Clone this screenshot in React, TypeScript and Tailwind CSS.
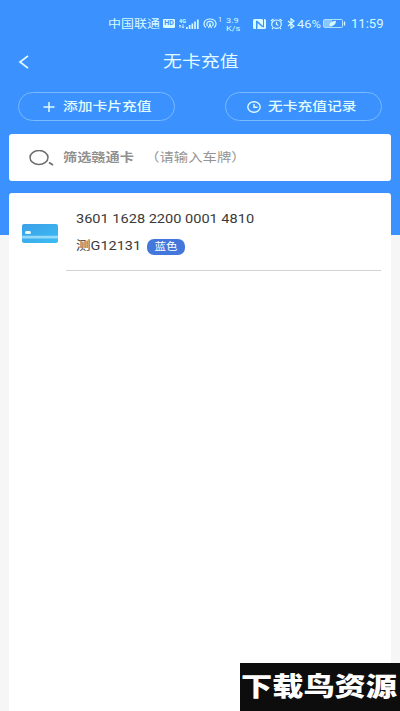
import React from 'react';

const FONT = "font-[Roboto,'Noto_Sans_CJK_SC',sans-serif]";

interface WideProps {
  width: string;
  className?: string;
  scale?: string;
  children: React.ReactNode;
}

// Text set slightly wider than its natural proportions
function Wide({ width, className = '', scale = 'scale-x-[1.18]', children }: WideProps) {
  return (
    <span className={`block shrink-0 ${width}`}>
      <span className={`block w-max origin-left whitespace-nowrap ${scale} ${className}`}>{children}</span>
    </span>
  );
}

function StatusBar() {
  return (
    <div className="flex h-[47px] items-center pl-[108px] text-[#d6fbff]">
      <Wide width="w-[55px]" className="pt-0.5 text-[11px] leading-4">中国联通</Wide>
      <span className="flex h-[9px] w-3 shrink-0 items-center justify-center rounded-[1px] bg-[#d6fbff] text-[7px] leading-none font-bold text-[#3b91fe]">
        HD
      </span>
      <svg className="ml-1 h-3 w-5 shrink-0" viewBox="0 0 20 12" fill="currentColor">
        <text x="0" y="4.8" fontSize="5.5" fontWeight="bold" fontFamily="Roboto">4G</text>
        <path d="M1 7v3M0 8.500l1-1.500 1 1.500M4 6v4M3 8.500l1 1.500 1-1.500" stroke="currentColor" strokeWidth="0.8" fill="none" />
        <path d="M7 9h1.700v2H7zM9.800 7h1.700v4H9.800zM12.500 5.500h1.700V11h-1.700zM15.200 3.500h1.700V11h-1.700zM18 1.500h1.700V11H18z" />
      </svg>
      <svg className="ml-1 h-[11px] w-[14px] shrink-0" viewBox="0 0 14 11" fill="none" stroke="currentColor" strokeWidth="1.200">
        <path d="M2.800 9.500C-.5 6.500.8 1 7 1s7.500 5.500 4.200 8.500" />
        <path d="M4.600 8C2.800 6 4 3.400 7 3.400S11.200 6 9.400 8" />
        <path d="M5.500 10 7 6.500 8.500 10" />
        <circle cx="7" cy="6" r="0.800" fill="currentColor" stroke="none" />
      </svg>
      <span className="-mt-1.5 ml-px w-[8px] shrink-0 text-[7px] leading-none">1</span>
      <span className="w-[27px] shrink-0 pt-0.5 text-[8px] leading-[8px]">
        <span className="block w-max origin-left scale-x-[1.15]">3.9</span>
        <span className="block w-max origin-left scale-x-[1.15]">K/s</span>
      </span>
      <svg className="h-[10px] w-[13px] shrink-0" viewBox="0 0 13 10" fill="none">
        <path d="M1.500 0H9l1 1v6L4 1.500 3 2v8H1.500Q0 10 0 8.500v-7Q0 0 1.500 0zM11.500 10H4L4.500 9V4L9 8l2 .5V0h.5Q13 0 13 1.500v7q0 1.500-1.500 1.500z" fill="currentColor" />
      </svg>
      <svg className="ml-1 h-3 w-[13px] shrink-0" viewBox="0 0 13 12" fill="none" stroke="currentColor" strokeWidth="1.200">
        <ellipse cx="6.500" cy="6.200" rx="4.800" ry="4.200" />
        <path d="M.8 3 3.400 1M12.200 3 9.600 1M6.500 3.800v2.700l1.800 1M3 10 2 11M10 10l1 1" />
      </svg>
      <svg className="ml-1 h-[11px] w-2 shrink-0" viewBox="0 0 8 11" fill="none" stroke="currentColor" strokeWidth="1.200">
        <path d="m1 3 6 5-3 2.300V.7L7 3 1 8" />
      </svg>
      <Wide width="w-[27px]" className="ml-[2px] pt-px text-[11.500px] leading-4" scale="scale-x-[1.12]">46%</Wide>
      <svg className="ml-px h-[9px] w-[23px] shrink-0" viewBox="0 0 23 9" fill="none">
        <rect x=".5" y=".5" width="19" height="8" rx="1" stroke="currentColor" strokeOpacity=".75" />
        <path d="M1 1h8v7H1z" fill="currentColor" fillOpacity=".5" />
        <path d="M6.500 7C6 3.500 9 2 13 1.700 13 5.500 10 7.500 6.500 7z" fill="currentColor" />
        <path d="M21.500 2.500v4" stroke="currentColor" strokeWidth="1.400" />
      </svg>
      <Wide width="w-[34px]" className="ml-[5px] pt-px text-[12px] leading-4" scale="scale-x-[1.09]">11:59</Wide>
    </div>
  );
}

function Header() {
  return (
    <div className="flex h-[30px] items-center pl-[18px] text-[#e4fcff]">
      <svg className="h-[14px] w-[11px]" viewBox="0 0 11 14" fill="none" stroke="currentColor" strokeWidth="1.700">
        <path d="M10 .8 2 7l8 6.200" />
      </svg>
      <Wide width="w-[76px]" className="ml-[134px] text-[16px] leading-6">无卡充值</Wide>
    </div>
  );
}

function Actions() {
  return (
    <div className="mt-[15px] flex justify-between px-[18px] text-[#e0fcff]">
      <button className="flex h-[29px] w-[157px] items-center rounded-full border border-[#79b9ff] pl-6">
        <svg className="h-[10px] w-3" viewBox="0 0 12 10" fill="none" stroke="currentColor" strokeWidth="1.500">
          <path d="M.5 5h11M6 0v10" />
        </svg>
        <Wide width="w-[90px]" className="ml-2 pt-px text-left text-[12.500px] leading-4 font-medium">添加卡片充值</Wide>
      </button>
      <button className="flex h-[29px] w-[157px] items-center rounded-full border border-[#79b9ff] pl-[21px]">
        <svg className="h-3 w-[14px]" viewBox="0 0 14 12" fill="none" stroke="currentColor" strokeWidth="1.400">
          <ellipse cx="7" cy="6" rx="6.200" ry="5.200" />
          <path d="M7 3v3.200h3.500" />
        </svg>
        <Wide width="w-[90px]" className="ml-[7px] text-left text-[12.500px] leading-4 font-medium">无卡充值记录</Wide>
      </button>
    </div>
  );
}

function SearchBox() {
  return (
    <div className="mx-[9px] mt-[13px] flex h-[47px] items-center rounded-[3px] bg-white pl-5">
      <svg className="h-4 w-[25px] shrink-0" viewBox="0 0 25 16" fill="none" stroke="#6e6e6e" strokeWidth="1.500">
        <ellipse cx="10" cy="7.500" rx="9" ry="7" />
        <path d="m20 12.500 4 2.500" strokeWidth="1.800" />
      </svg>
      <Wide width="w-[82px]" className="ml-[9px] text-[12px] leading-4 font-bold text-[#909090]">筛选赣通卡</Wide>
      <Wide width="w-[100px]" className="ml-[9px] text-[12.200px] leading-4 text-[#959595]">（请输入车牌）</Wide>
    </div>
  );
}

function CardItem({ number, plate, color }: { number: string; plate: string; color: string }) {
  return (
    <div className="flex pl-[13px]">
      <svg className="mt-[31px] h-[19px] w-9 shrink-0" viewBox="0 0 36 19">
        <defs>
          <linearGradient id="card-fill" x1="0" x2="1" y1="0" y2="1">
            <stop offset="0" stopColor="#3d9fe8" />
            <stop offset="1" stopColor="#3abdf3" />
          </linearGradient>
        </defs>
        <rect width="36" height="19" rx="2" fill="url(#card-fill)" />
        <path d="M0 11.800h36v2.600H0z" fill="#94d9fa" />
        <rect x="3" y="7" width="6" height="3" rx="1.500" fill="#e9faff" />
      </svg>
      <div className="ml-2 flex h-[78px] w-[315px] flex-col border-b border-[#d2d2d2] pl-[10px] text-[#3a3a3a]">
        <Wide width="w-[180px]" className="mt-[17px] text-[13px] leading-[18px]" scale="scale-x-[1.12]">{number}</Wide>
        <div className="mt-[8px] flex items-center">
          <Wide width="w-[71px]" className="text-[12.500px] leading-[18px]" scale="scale-x-[1.16]">{plate}</Wide>
          <span className="mt-[3px] flex h-4 w-[38px] items-center justify-center rounded-[7px] bg-[#4477dc] text-white">
            <span className="inline-block scale-x-[1.15] text-[10px] leading-4">{color}</span>
          </span>
        </div>
      </div>
    </div>
  );
}

export default function App() {
  return (
    <div className={`relative h-[711px] w-[400px] overflow-hidden bg-[#f6f6f6] bg-[linear-gradient(#3b91fe_235px,#f6f6f6_235px)] ${FONT}`}>
      <StatusBar />
      <Header />
      <Actions />
      <SearchBox />
      <div className="mx-[9px] mt-3 h-[518px] rounded-t-[3px] bg-white">
        <CardItem number="3601 1628 2200 0001 4810" plate="测G12131" color="蓝色" />
      </div>
      <div className="absolute right-0 bottom-0 flex h-12 w-40 items-center bg-[#0d0d0d] pl-px text-white">
        <Wide width="w-[157px]" className="text-[26px] leading-[48px] font-black" scale="scale-x-[1.2]">下载鸟资源</Wide>
      </div>
    </div>
  );
}
